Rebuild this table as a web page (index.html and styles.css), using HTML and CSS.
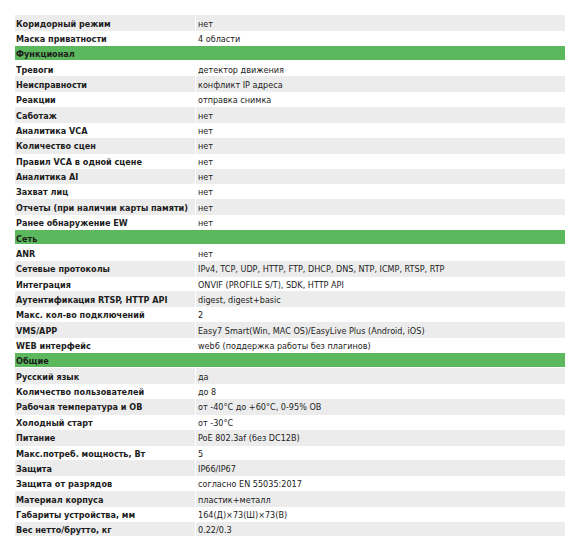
FILE: index.html
```html
<!DOCTYPE html>
<html lang="ru">
<head>
<meta charset="utf-8">
<title>Характеристики</title>
<link rel="stylesheet" href="styles.css">
</head>
<body>
<div class="specs">
<div class="row g"><div class="k">Коридорный режим</div><div class="v">нет</div></div>
<div class="row"><div class="k">Маска приватности</div><div class="v">4 области</div></div>
<div class="row sec"><div class="k">Функционал</div></div>
<div class="row"><div class="k">Тревоги</div><div class="v">детектор движения</div></div>
<div class="row g"><div class="k">Неисправности</div><div class="v">конфликт IP адреса</div></div>
<div class="row"><div class="k">Реакции</div><div class="v">отправка снимка</div></div>
<div class="row g"><div class="k">Саботаж</div><div class="v">нет</div></div>
<div class="row"><div class="k">Аналитика VCA</div><div class="v">нет</div></div>
<div class="row g"><div class="k">Количество сцен</div><div class="v">нет</div></div>
<div class="row"><div class="k">Правил VCA в одной сцене</div><div class="v">нет</div></div>
<div class="row g"><div class="k">Аналитика AI</div><div class="v">нет</div></div>
<div class="row"><div class="k">Захват лиц</div><div class="v">нет</div></div>
<div class="row g"><div class="k">Отчеты (при наличии карты памяти)</div><div class="v">нет</div></div>
<div class="row"><div class="k">Ранее обнаружение EW</div><div class="v">нет</div></div>
<div class="row sec"><div class="k">Сеть</div></div>
<div class="row"><div class="k">ANR</div><div class="v">нет</div></div>
<div class="row g"><div class="k">Сетевые протоколы</div><div class="v">IPv4, TCP, UDP, HTTP, FTP, DHCP, DNS, NTP, ICMP, RTSP, RTP</div></div>
<div class="row"><div class="k">Интеграция</div><div class="v">ONVIF (PROFILE S/T), SDK, HTTP API</div></div>
<div class="row g"><div class="k">Аутентификация RTSP, HTTP API</div><div class="v">digest, digest+basic</div></div>
<div class="row"><div class="k">Макс. кол-во подключений</div><div class="v">2</div></div>
<div class="row g"><div class="k">VMS/APP</div><div class="v">Easy7 Smart(Win, MAC OS)/EasyLive Plus (Android, iOS)</div></div>
<div class="row"><div class="k">WEB интерфейс</div><div class="v">web6 (поддержка работы без плагинов)</div></div>
<div class="row sec"><div class="k">Общие</div></div>
<div class="row g"><div class="k">Русский язык</div><div class="v">да</div></div>
<div class="row"><div class="k">Количество пользователей</div><div class="v">до 8</div></div>
<div class="row g"><div class="k">Рабочая температура и ОВ</div><div class="v">от -40°C до +60°C, 0-95% ОВ</div></div>
<div class="row"><div class="k">Холодный старт</div><div class="v">от -30°C</div></div>
<div class="row g"><div class="k">Питание</div><div class="v">PoE 802.3af (без DC12В)</div></div>
<div class="row"><div class="k">Макс.потреб. мощность, Вт</div><div class="v">5</div></div>
<div class="row g"><div class="k">Защита</div><div class="v">IP66/IP67</div></div>
<div class="row"><div class="k">Защита от разрядов</div><div class="v">согласно EN 55035:2017</div></div>
<div class="row g"><div class="k">Материал корпуса</div><div class="v">пластик+металл</div></div>
<div class="row"><div class="k">Габариты устройства, мм</div><div class="v">164(Д)×73(Ш)×73(В)</div></div>
<div class="row g"><div class="k">Вес нетто/брутто, кг</div><div class="v">0.22/0.3</div></div>
</div>
</body>
</html>
```
FILE: styles.css
```css
html, body {
  margin: 0;
  padding: 0;
  background: #ffffff;
}
body {
  padding: 15px 0 0 15px;
  font-family: "DejaVu Sans Condensed", "DejaVu Sans", sans-serif;
  font-stretch: condensed;
  font-size: 9px;
  color: #1c1c1c;
}
.specs {
  display: flex;
  flex-direction: column;
  gap: 1px;
  width: 550px;
}
.row {
  display: grid;
  grid-template-columns: 180px 1fr;
  column-gap: 1px;
  height: 14.36px;
}
.k, .v {
  line-height: 14.36px;
  padding-top: 1.5px;
  white-space: nowrap;
}
.k {
  font-weight: bold;
  padding-left: 1px;
}
.v {
  padding-left: 2px;
}
.row.g .k, .row.g .v {
  background: #ececec;
}
.row.sec {
  grid-template-columns: 1fr;
  background: #5cb85c;
}
```
